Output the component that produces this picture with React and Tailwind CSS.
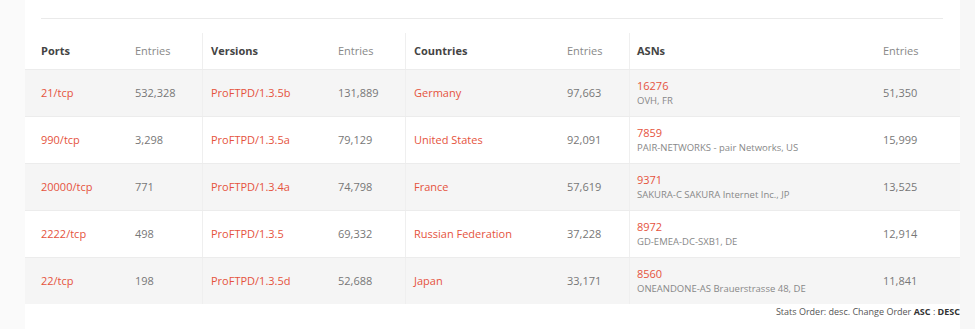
import React from 'react';

const rows = [
  { port: '21/tcp', portN: '532,328', ver: 'ProFTPD/1.3.5b', verN: '131,889', country: 'Germany', countryN: '97,663', asn: '16276', asnName: 'OVH, FR', asnN: '51,350' },
  { port: '990/tcp', portN: '3,298', ver: 'ProFTPD/1.3.5a', verN: '79,129', country: 'United States', countryN: '92,091', asn: '7859', asnName: 'PAIR-NETWORKS - pair Networks, US', asnN: '15,999' },
  { port: '20000/tcp', portN: '771', ver: 'ProFTPD/1.3.4a', verN: '74,798', country: 'France', countryN: '57,619', asn: '9371', asnName: 'SAKURA-C SAKURA Internet Inc., JP', asnN: '13,525' },
  { port: '2222/tcp', portN: '498', ver: 'ProFTPD/1.3.5', verN: '69,332', country: 'Russian Federation', countryN: '37,228', asn: '8972', asnName: 'GD-EMEA-DC-SXB1, DE', asnN: '12,914' },
  { port: '22/tcp', portN: '198', ver: 'ProFTPD/1.3.5d', verN: '52,688', country: 'Japan', countryN: '33,171', asn: '8560', asnName: 'ONEANDONE-AS Brauerstrasse 48, DE', asnN: '11,841' },
];

const grid = 'grid grid-cols-[110px_67px_136px_67px_162px_62px_254px_76px]';
const link = 'text-[#e5533d]';
const num = 'text-[#777]';
const sep = 'border-l border-[#efefef]';

export default function App() {
  return (
    <div className="flex h-[329px] w-full text-[11px]" style={{ fontFamily: '"Open Sans", "Noto Sans", sans-serif' }}>
      <div className="w-[25px] bg-[#fafafa]" />
      <div className="w-[935px] bg-white pt-[18px]">
        <div className="ml-4 mr-[17px] border-t border-[#eaeaea]" />
        <div className="mt-[13px]">
          <div className={`${grid} h-[37px] items-stretch pt-[1px]`}>
            <div className="flex items-center pl-4 font-bold text-[#444]">Ports</div>
            <div className="flex items-center text-[#888]">Entries</div>
            <div className={`flex items-center pl-2 font-bold text-[#444] ${sep}`}>Versions</div>
            <div className="flex items-center text-[#888]">Entries</div>
            <div className={`flex items-center pl-2 font-bold text-[#444] ${sep}`}>Countries</div>
            <div className="flex items-center text-[#888]">Entries</div>
            <div className={`flex items-center pl-[7px] font-bold text-[#444] ${sep}`}>ASNs</div>
            <div className="flex items-center text-[#888]">Entries</div>
          </div>
          {rows.map((r, i) => (
            <div key={r.port} className={`${grid} h-[47px] border-t border-[#ececec] ${i % 2 === 0 ? 'bg-[#f5f5f5]' : 'bg-white'}`}>
              <div className={`flex items-center pl-4 ${link}`}>{r.port}</div>
              <div className={`flex items-center ${num}`}>{r.portN}</div>
              <div className={`flex items-center pl-2 ${link} ${sep}`}>{r.ver}</div>
              <div className={`flex items-center ${num}`}>{r.verN}</div>
              <div className={`flex items-center pl-2 ${link} ${sep}`}>{r.country}</div>
              <div className={`flex items-center ${num}`}>{r.countryN}</div>
              <div className={`flex flex-col justify-center pl-[7px] ${sep}`}>
                <span className={`${link} leading-[16px]`}>{r.asn}</span>
                <span className="text-[9.5px] leading-[14px] text-[#888]">{r.asnName}</span>
              </div>
              <div className={`flex items-center ${num}`}>{r.asnN}</div>
            </div>
          ))}
          <div className="pt-[1px] text-right text-[9px] leading-[14px] text-[#555]">
            Stats Order: desc. Change Order <b className="text-[#333]">ASC</b> : <b className="text-[#333]">DESC</b>
          </div>
        </div>
      </div>
      <div className="flex-1 bg-[#f7f7f7]" />
    </div>
  );
}
